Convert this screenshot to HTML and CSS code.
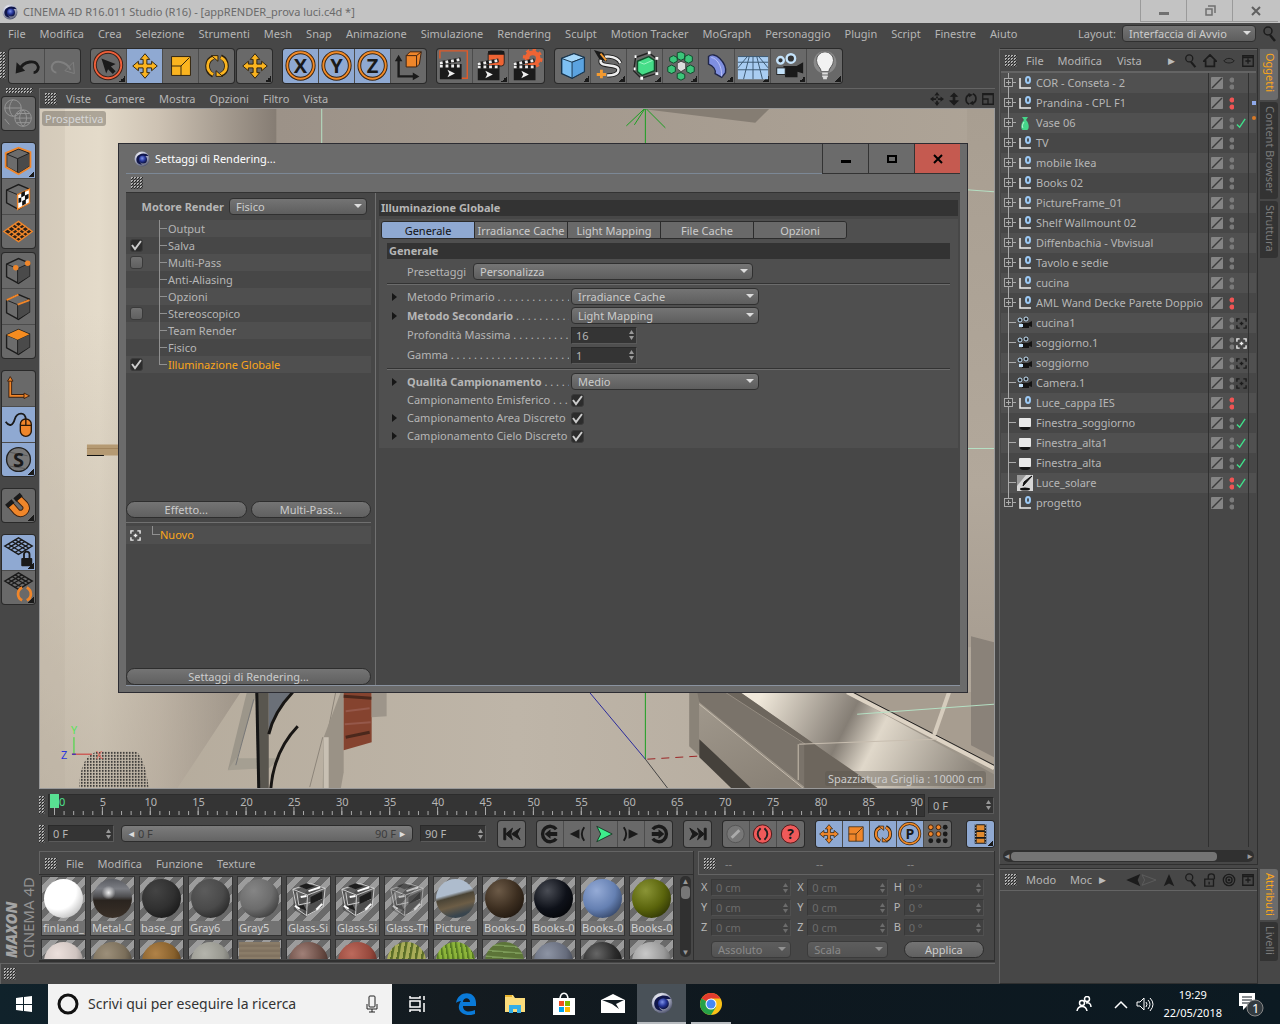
FILE: index.html
```html
<!DOCTYPE html>
<html lang="it">
<head>
<meta charset="utf-8">
<meta name="viewport" content="width=device-width, initial-scale=1">
<title>CINEMA 4D R16.011 Studio (R16) - [appRENDER_prova luci.c4d *]</title>
<link rel="stylesheet" href="styles.css">
</head>
<body>
<svg class="defs" aria-hidden="true">
<defs>
<radialGradient id="ball" cx=".4" cy=".3" r=".8"><stop offset="0" stop-color="#fff"/><stop offset=".5" stop-color="#b8bcd0"/><stop offset="1" stop-color="#333852"/></radialGradient>
<radialGradient id="lens" cx=".4" cy=".35" r=".7"><stop offset="0" stop-color="#7f93e8"/><stop offset=".5" stop-color="#27379a"/><stop offset="1" stop-color="#070b30"/></radialGradient>
<pattern id="dither" width="3" height="3" patternUnits="userSpaceOnUse"><rect width="1.6" height="1.6" fill="#222"/></pattern>
<symbol id="c4d" viewBox="0 0 16 16"><circle cx="8" cy="8" r="7.5" fill="url(#ball)"/><path d="M14.500 5C12 1 4 2 2.500 7c-1 4 2 7 6 6.500C5 12 5 8 8 6c2-1 5-1 6.500-1z" fill="#10164a"/><circle cx="9" cy="8.500" r="4" fill="url(#lens)"/></symbol>
<symbol id="undo" viewBox="0 0 36 36"><path d="M10 22c4-9 18-12 20-3 0 4-3 6-5 6" fill="none" stroke="currentColor" stroke-width="3"/><path d="M6 26l1-12 9 9z" fill="currentColor"/></symbol>
<symbol id="redo" viewBox="0 0 36 36"><path d="M26 22c-4-9-18-12-20-3 0 4 3 6 5 6" fill="none" stroke="currentColor" stroke-width="2"/><path d="M30 26l-1-12-9 9z" fill="none" stroke="currentColor"/></symbol>
<symbol id="pick" viewBox="0 0 36 36"><circle cx="17" cy="17" r="14" fill="none" stroke="#3a2018" stroke-width="4"/><circle cx="17" cy="17" r="14" fill="none" stroke="#f0603a" stroke-width="2"/><path d="M10 10l15 6-5 2.500 5 5-3 3-5-5-2 4.500z" fill="#1a1a1a"/></symbol>
<symbol id="move" viewBox="0 0 36 36"><path d="M18 5l5 6h-3v5h5v-3l6 5-6 5v-3h-5v5h3l-5 6-5-6h3v-5h-5v3l-6-5 6-5v3h5v-5h-3z" fill="currentColor" stroke="#2a2010"/></symbol>
<symbol id="scale" viewBox="0 0 36 36"><path d="M8 8h20v20H8z" fill="currentColor" stroke="#2a2010"/><path d="M8 18h10v10M18 18l9-9" fill="none" stroke="#2a2010"/></symbol>
<symbol id="rotate" viewBox="0 0 36 36"><g fill="none" stroke="#2a2010" stroke-width="5"><path d="M14 28C6 24 6 12 14 9M22 8c8 4 8 16 0 19"/></g><g fill="none" stroke="currentColor" stroke-width="3"><path d="M14 27C6 23 6 12 15 9M22 9c8 4 8 15-1 18"/></g><path d="M12 7h7v6zM24 29h-7v-6z" fill="currentColor" stroke="#2a2010"/></symbol>
<symbol id="ring" viewBox="0 0 36 36"><circle cx="17.500" cy="17.500" r="14" fill="none" stroke="#3a2410" stroke-width="4"/><circle cx="17.500" cy="17.500" r="14" fill="none" stroke="#f08a28" stroke-width="2"/></symbol>
<symbol id="axes" viewBox="0 0 36 36"><path d="M7 12v17h17" fill="none" stroke="#1a1a1a" stroke-width="2.500"/><path d="M3 13l4-7 4 7zM22 25l7 4-7 4z" fill="#1a1a1a"/><path d="M15 7l4-4h12l-2 13-3 3H15z" fill="#f0862a" stroke="#3a2010"/><path d="M15 7h11v12M26 7l5-4" fill="none" stroke="#3a2010"/></symbol>
<symbol id="clap" viewBox="0 0 36 36"><path d="M2 20h23v12H2z" fill="#1a1a1a"/><path d="M2 18h23" stroke="#1a1a1a" stroke-width="4"/><path d="M2 18h23" stroke="#eee" stroke-width="3" stroke-dasharray="3 3"/><path d="M2 15l22-4" stroke="#1a1a1a" stroke-width="4"/><path d="M2 15l22-4" stroke="#eee" stroke-width="3" stroke-dasharray="3 3"/><path d="M10 22l8 4-8 4 2-4z" fill="#eee"/></symbol>
<symbol id="rview" viewBox="0 0 36 36"><path d="M2 10V2h29v29h-7" fill="none" stroke="#e05a28" stroke-width="1.500"/><use href="#clap"/></symbol>
<symbol id="rpic" viewBox="0 0 36 36"><rect x="15" y="2" width="17" height="16" rx="3" fill="#ee6434" stroke="#222"/><path d="M15 2h17v4H15z" fill="#1a1a1a"/><use href="#clap" x="2" y="1"/></symbol>
<symbol id="rset" viewBox="0 0 36 36"><circle cx="24" cy="10" r="6" fill="none" stroke="#ee6434" stroke-width="5"/><circle cx="24" cy="10" r="9" fill="none" stroke="#ee6434" stroke-width="3" stroke-dasharray="3.500 3.500"/><use href="#clap" x="2" y="1"/></symbol>
<symbol id="cube" viewBox="0 0 36 36"><path d="M6 10l13-5 11 4v15l-13 7L6 26z" fill="#7cc0f4" stroke="#16324a" stroke-width="1.500"/><path d="M6 10l11 4 13-5-11-4z" fill="#a6d8fb" stroke="#16324a"/><path d="M17 14l13-5v15l-13 7z" fill="#5ba3e0" stroke="#16324a"/></symbol>
<symbol id="spline" viewBox="0 0 36 36"><path d="M30 15c-3-8-21-10-21-2 0 7 19 2 19 9 0 5-6 6-12 6" fill="none" stroke="#222" stroke-width="4.500"/><path d="M30 15c-3-8-21-10-21-2 0 7 19 2 19 9 0 5-6 6-12 6" fill="none" stroke="#eee" stroke-width="2.500"/><path d="M2 1l10 3 4 9-8-2z" fill="#1a1a1a"/><path d="M9 5l6 7" stroke="#f39a30" stroke-width="2"/><path d="M10 22v9M5 27h10" stroke="#f39a30" stroke-width="3"/></symbol>
<symbol id="subd" viewBox="0 0 36 36"><path d="M8 9l14-5 8 6v16l-16 5-8-8z" fill="none" stroke="#222" stroke-width="1.500"/><path d="M10 13l12-5 6 4v11l-13 5-5-4z" fill="#45dd88" stroke="#124a2a" stroke-linejoin="round" stroke-width="1.500"/><path d="M12 14l5 2 9-4" fill="none" stroke="#9ff5c4"/><path d="M7 8h2M21 4h3M29 10h3M29 26h3M13 31h3M6 21h2" stroke="#fff" stroke-width="3"/></symbol>
<symbol id="array" viewBox="0 0 36 36"><g fill="#3cc57a" stroke="#11452a"><path d="M14 4l4-1 4 2v5l-4 2-4-2zM14 26l4-1 4 2v4l-4 2-4-2zM6 9l4-2 4 2v4l-4 2-4-2zM22 8l4-2 4 2v5l-4 2-4-2zM4 19l4-2 4 2v5l-4 2-4-2zM24 19l4-2 4 2v5l-4 2-4-2z"/></g><path d="M14 15l4-2 5 2v6l-5 3-4-3z" fill="#ddd" stroke="#444"/></symbol>
<symbol id="bend" viewBox="0 0 36 36"><path d="M9 8c3-3 8-2 12 2s7 10 6 15l-4 5-7-4c1-4-2-8-7-10z" fill="#7f8fe0" stroke="#20264a" stroke-width="1.500"/><path d="M12 9c6 1 11 8 11 20" fill="none" stroke="#bcc5fa"/></symbol>
<symbol id="floor" viewBox="0 0 36 36"><path d="M2 8h32v24H2z" fill="#a9cdf2"/><path d="M2 8h32M2 14h32M2 22h32M18 8v24M12 8L2 20M24 8l10 12M14 8L8 32M22 8l6 24" stroke="#3a566e"/></symbol>
<symbol id="cam" viewBox="0 0 36 36"><path d="M12 18h14l7-4v12l-6-2v6H14z" fill="#1a1a1a"/><circle cx="9" cy="12" r="3.500" fill="#333" stroke="#c4e2fa" stroke-width="2.500"/><circle cx="20" cy="10" r="4.500" fill="#333" stroke="#c4e2fa" stroke-width="2.500"/><rect x="5" y="20" width="9" height="7" fill="#c4e2fa" stroke="#222"/></symbol>
<symbol id="bulb" viewBox="0 0 36 36"><circle cx="18" cy="14" r="12" fill="#aaa" opacity=".5"/><path d="M14 24c0-4-5-6-5-12a9 9 0 0118 0c0 6-5 8-5 12z" fill="#f2f2f2" stroke="#555"/><path d="M15 26h6M15 29h6M16 31h4" stroke="#ddd" stroke-width="2"/></symbol>
<symbol id="globe" viewBox="0 0 36 36" fill="none" stroke="#999"><circle cx="12" cy="12" r="9"/><path d="M3 12h18M12 3c-5 5-5 13 0 18"/><circle cx="23" cy="23" r="9"/><path d="M14 23h18M16 18h14M16 28h14M23 14c-5 5-5 13 0 18 5-5 5-13 0-18M3 24l5 6"/></symbol>
<symbol id="gcube" viewBox="0 0 36 36"><path d="M5 11l13-6 12 5v14l-12 8-13-7z" fill="#6c6c6c" stroke="#1c1c1c" stroke-width="1.500"/><path d="M17 16l13-6v14l-13 8z" fill="#4a4a4a"/><path d="M5 11l12 5 13-6M17 16v16" fill="none" stroke="#1c1c1c"/></symbol>
<symbol id="model" viewBox="0 0 36 36"><use href="#gcube"/><path d="M4 10l14-6 13 5v16l-13 8-14-8z" fill="none" stroke="#f0862a" stroke-width="2"/></symbol>
<symbol id="tex" viewBox="0 0 36 36"><use href="#gcube"/><path d="M17 16l13-6v15l-13 7z" fill="#fff" stroke="#f0862a" stroke-width="1.500"/><path d="M21 14l4-2v5l-4 2zM25 17l4-2v5l-4 2zM18 20l3-1v5l-3 1zM22 23l4-2v5l-4 2z" fill="#111"/></symbol>
<symbol id="plane" viewBox="0 0 36 36"><path d="M2 18L18 7l15 11-15 11z" fill="#2a2018" stroke="currentColor" stroke-width="1.500"/><path d="M6 15l15 11M10 12l15 11M14 10l15 11M30 15L15 26M26 12L11 23M22 10L7 21" stroke="currentColor" stroke-width="1.500"/></symbol>
<symbol id="mesh" viewBox="0 0 36 36"><path d="M3 11L18 2l15 9-15 9z" fill="none" stroke="#1a1a1a" stroke-width="1.500"/><path d="M7 9l15 9M11 6l15 9M14 4l15 9M29 9l-15 9M25 6L10 15M22 4L7 13" stroke="#1a1a1a" stroke-width="1.500"/></symbol>
<symbol id="points" viewBox="0 0 36 36"><use href="#gcube"/><circle cx="15" cy="15" r="3" fill="#f0862a"/><circle cx="28" cy="10" r="3" fill="#f0862a"/></symbol>
<symbol id="edges" viewBox="0 0 36 36"><use href="#gcube"/><path d="M5 11l13-6M17 16l13-5" stroke="#f0862a" stroke-width="2"/></symbol>
<symbol id="polys" viewBox="0 0 36 36"><use href="#gcube"/><path d="M5 11l13-6 12 5-13 6z" fill="#f68c20"/></symbol>
<symbol id="axis" viewBox="0 0 36 36"><path d="M9 9v17h15" fill="none" stroke="#3a2010" stroke-width="4"/><path d="M9 9v17h15" fill="none" stroke="#f0862a" stroke-width="2"/><path d="M6 10l3-5 3 5zM24 23l6 3-6 3z" fill="#f0862a" stroke="#3a2010"/></symbol>
<symbol id="mouse" viewBox="0 0 36 36"><path d="M4 15c4 6 8 4 10-3s12-9 12 1" fill="none" stroke="#1a1a1a" stroke-width="2"/><rect x="20" y="12" width="12" height="19" rx="6" fill="#f0862a" stroke="#2a1808" stroke-width="1.500"/><path d="M20 19h12M26 12v7" stroke="#2a1808" stroke-width="1.500"/></symbol>
<symbol id="disc" viewBox="0 0 36 36"><circle cx="18" cy="18" r="13" fill="#777" stroke="#222" stroke-width="1.500"/><path d="M8 10l20 4M7 25l19 3" stroke="#555"/></symbol>
<symbol id="magnet" viewBox="0 0 36 36"><path d="M9 17l7 8c5 5 14-2 9-8l-7-7" fill="none" stroke="#3a2010" stroke-width="8"/><path d="M9 17l7 8c5 5 14-2 9-8l-7-7" fill="none" stroke="#f0862a" stroke-width="6"/><path d="M5 19l7-6M14 12l7-6" stroke="#1a1a1a" stroke-width="5"/></symbol>
<symbol id="meshlock" viewBox="0 0 36 36"><use href="#mesh"/><rect x="21" y="24" width="12" height="9" rx="1" fill="#1a1a1a"/><path d="M24 24v-4c0-4 6-4 6 0v4" fill="none" stroke="#1a1a1a" stroke-width="2"/></symbol>
<symbol id="meshrot" viewBox="0 0 36 36"><use href="#mesh"/><path d="M22 18c-6 3-6 11 0 14M27 18c6 3 6 11 0 14" fill="none" stroke="#f0862a" stroke-width="3"/></symbol>
<symbol id="lens-s" viewBox="0 0 16 16"><circle cx="6" cy="5" r="4" fill="none" stroke="currentColor" stroke-width="1.500"/><path d="M8 9l5 6" stroke="currentColor" stroke-width="2.500"/></symbol>
<symbol id="home" viewBox="0 0 16 16"><path d="M1 8l7-7 7 7h-2v6H3V8z" fill="none" stroke="currentColor" stroke-width="2"/></symbol>
<symbol id="eye" viewBox="0 0 16 16"><path d="M2 8c3-4 9-4 12 0-3 3-9 3-12 0z" fill="none" stroke="currentColor"/></symbol>
<symbol id="plus" viewBox="0 0 16 16"><path d="M2 2h12v12H2zM8 5v6M5 8h6M2 4h12" fill="none" stroke="currentColor" stroke-width="1.500"/></symbol>
<symbol id="target" viewBox="0 0 16 16"><g fill="none" stroke="currentColor" stroke-width="1.500"><circle cx="8" cy="8" r="6.500"/><circle cx="8" cy="8" r="3.500"/></g><circle cx="8" cy="8" r="1.500" fill="currentColor"/></symbol>
<symbol id="lock" viewBox="0 0 16 16"><path d="M2 7h10v8H2zM6 7V4c0-4 7-4 7 0v3M7 10v3" fill="none" stroke="currentColor" stroke-width="1.500"/></symbol>
<symbol id="nav" viewBox="0 0 16 16"><path d="M8 0l3 4H5zM8 16l3-4H5zM0 8l4-3v6zM16 8l-4-3v6zM7 5h2v2H7zM7 10h2v2H7zM4 7h3v2H4zM9 7h3v2H9z" fill="currentColor"/></symbol>
<symbol id="dolly" viewBox="0 0 16 16"><path d="M8 1l4 4H9v5h4l-5 5-5-5h4V5H4z" fill="currentColor" stroke="currentColor"/></symbol>
<symbol id="orbit" viewBox="0 0 16 16"><path d="M6 14C1 12 1 4 7 3M10 2c5 2 5 10-1 11" fill="none" stroke="currentColor" stroke-width="2"/><path d="M5 1l5 2-4 3zM11 15l-5-2 4-3z" fill="currentColor"/></symbol>
<symbol id="maxi" viewBox="0 0 16 16"><path d="M2 2h12v12H2zM2 8h6v6M2 3h12" fill="none" stroke="currentColor" stroke-width="1.500"/></symbol>
<symbol id="i-null" viewBox="0 0 16 16"><path d="M3 3v10h11" fill="none" stroke="#eee" stroke-width="1.500"/><ellipse cx="11" cy="5" rx="2" ry="3" fill="none" stroke="#9cc9f4" stroke-width="2"/></symbol>
<symbol id="i-vase" viewBox="0 0 16 16"><path d="M5 2h6L9 5c4 4 3 10 1 10H6C4 15 3 9 7 5z" fill="#45d589"/><path d="M7 7c-2 3-2 5-1 6" fill="none" stroke="#b4f7d2"/></symbol>
<symbol id="i-cam" viewBox="0 0 16 16"><path d="M5 8h6l4-2v6l-3-1v2H5z" fill="#151515"/><g fill="#222" stroke="#c4e2fa"><circle cx="3" cy="5" r="2"/><circle cx="9" cy="4" r="2"/></g><path d="M2 9h4v3H2z" fill="#c4e2fa"/></symbol>
<symbol id="i-area" viewBox="0 0 16 16"><ellipse cx="8" cy="13" rx="5" ry="2" fill="#151515"/><rect x="2" y="3" width="12" height="9" rx="1" fill="#e8e8e8"/></symbol>
<symbol id="i-sun" viewBox="0 0 16 16"><path d="M0 0h16v16H0z" fill="#d8d8d8"/><path d="M0 0h9L0 11z" fill="#999"/><path d="M15 1L6 11l1-4 5-4z" fill="#111" stroke="#111"/><ellipse cx="8" cy="14" rx="5" ry="1.500" fill="#111"/></symbol>
<symbol id="layer" viewBox="0 0 12 12"><rect width="12" height="12" rx="1" fill="#858585"/><path d="M1 11L11 1" stroke="#3c3c3c" stroke-width="1.500"/></symbol>
<symbol id="tick" viewBox="0 0 12 12"><path d="M1 7l3 3 6-9" fill="none" stroke="#3fe08a" stroke-width="1.500"/></symbol>
<symbol id="frame" viewBox="0 0 12 12"><path d="M1 4V1h3M8 1h3v3M11 8v3H8M4 11H1V8M6 4v4M4 6h4" fill="none" stroke="currentColor" stroke-width="1.500"/></symbol>
<symbol id="glass" viewBox="0 0 44 44"><path d="M6 14l22-8 11 5-3 20-17 9L7 33z" fill="#444" opacity=".7"/><path d="M6 12l18-6 15 5-18 7zM21 18l-1 21M10 15l2 13 10-2 14-4M6 12l4 20 10 7 17-9 2-19" fill="none" stroke="#cfcfcf"/><path d="M12 9l8-3 8 3-8 3zM24 20l12-6v8l-12 5zM10 30l7-2 3 6z" fill="#1d1d1d"/><path d="M8 29l5 3M30 33l6-6M14 20l6-1M22 14l12-4" stroke="#fff" stroke-width="2"/></symbol>
</defs>
</svg>

<header class="titlebar">
<svg class="s16"><use href="#c4d"/></svg>
<h1>CINEMA 4D R16.011 Studio (R16) - [appRENDER_prova luci.c4d *]</h1>
<div class="winbtns">
<button aria-label="Riduci"><svg width="12" height="12"><path d="M1 7h10v3H1z" fill="#707070"/></svg></button>
<button aria-label="Ripristina"><svg width="12" height="12"><path d="M2 4h6v6H2zM4 1h7v7" fill="none" stroke="#707070" stroke-width="1.500"/></svg></button>
<button aria-label="Chiudi"><svg width="12" height="12"><path d="M2 2l8 8M10 2l-8 8" stroke="#606060" stroke-width="2"/></svg></button>
</div>
</header>

<nav class="menubar">
<a href="#">File</a><a href="#">Modifica</a><a href="#">Crea</a><a href="#">Selezione</a><a href="#">Strumenti</a><a href="#">Mesh</a><a href="#">Snap</a><a href="#">Animazione</a><a href="#">Simulazione</a><a href="#">Rendering</a><a href="#">Sculpt</a><a href="#">Motion Tracker</a><a href="#">MoGraph</a><a href="#">Personaggio</a><a href="#">Plugin</a><a href="#">Script</a><a href="#">Finestre</a><a href="#">Aiuto</a>
<label class="push" for="layout">Layout:</label>
<select id="layout"><option>Interfaccia di Avvio</option></select>
<svg class="s16 ink"><use href="#lens-s"/></svg>
</nav>

<div class="main">
<div class="left">
<div class="toolbar">
<i class="grip tall"></i>
<div class="grp"><button aria-label="Annulla"><svg><use href="#undo"/></svg></button><button class="dim" aria-label="Ripeti"><svg><use href="#redo"/></svg></button></div>
<div class="grp close"><button class="more" aria-label="Selezione"><svg><use href="#pick"/></svg></button><button class="on" aria-label="Sposta"><svg class="yel"><use href="#move"/></svg></button><button aria-label="Scala"><svg class="yel"><use href="#scale"/></svg></button><button aria-label="Ruota"><svg class="yel"><use href="#rotate"/></svg></button></div>
<div class="grp"><button class="more" aria-label="Ultimo strumento"><svg class="yel"><use href="#move"/></svg></button></div>
<div class="grp"><button class="on axis"><svg><use href="#ring"/></svg><b>X</b></button><button class="on axis"><svg><use href="#ring"/></svg><b>Y</b></button><button class="on axis"><svg><use href="#ring"/></svg><b>Z</b></button><button aria-label="Coordinate"><svg><use href="#axes"/></svg></button></div>
<div class="grp"><button aria-label="Render vista"><svg><use href="#rview"/></svg></button><button class="more" aria-label="Render immagine"><svg><use href="#rpic"/></svg></button><button aria-label="Settaggi render"><svg><use href="#rset"/></svg></button></div>
<div class="grp"><button class="more" aria-label="Cubo"><svg><use href="#cube"/></svg></button><button class="more" aria-label="Spline"><svg><use href="#spline"/></svg></button><button class="more" aria-label="Generatore"><svg><use href="#subd"/></svg></button><button class="more" aria-label="Array"><svg><use href="#array"/></svg></button><button class="more" aria-label="Deformatore"><svg><use href="#bend"/></svg></button><button class="more" aria-label="Ambiente"><svg><use href="#floor"/></svg></button><button class="more" aria-label="Camera"><svg><use href="#cam"/></svg></button><button class="more" aria-label="Luce"><svg><use href="#bulb"/></svg></button></div>
</div>

<div class="work">
<aside class="tools">
<i class="grip wide"></i>
<div class="vgrp gap"><button aria-label="Converti"><svg><use href="#globe"/></svg></button></div>
<div class="vgrp"><button class="on more" aria-label="Modello"><svg><use href="#model"/></svg></button><button aria-label="Texture"><svg><use href="#tex"/></svg></button><button aria-label="Piano"><svg class="org"><use href="#plane"/></svg></button></div>
<div class="vgrp gap"><button aria-label="Punti"><svg><use href="#points"/></svg></button><button aria-label="Bordi"><svg><use href="#edges"/></svg></button><button aria-label="Poligoni"><svg><use href="#polys"/></svg></button></div>
<div class="vgrp gap"><button aria-label="Asse"><svg><use href="#axis"/></svg></button><button class="on" aria-label="Tweak"><svg><use href="#mouse"/></svg></button><button class="on axis more"><svg><use href="#disc"/></svg><b>S</b></button></div>
<div class="vgrp gap"><button class="more" aria-label="Snap"><svg><use href="#magnet"/></svg></button></div>
<div class="vgrp"><button class="on more" aria-label="Blocca piano"><svg><use href="#meshlock"/></svg></button><button class="more" aria-label="Ruota piano"><svg><use href="#meshrot"/></svg></button></div>
<div class="brand"><span><b>MAXON</b><br>CINEMA 4D</span></div>
</aside>

<div class="center">
<nav class="panelbar view"><i class="grip"></i><a href="#">Viste</a><a href="#">Camere</a><a href="#">Mostra</a><a href="#">Opzioni</a><a href="#">Filtro</a><a href="#">Vista</a>
<span class="push ico"><svg><use href="#nav"/></svg><svg><use href="#dolly"/></svg><svg><use href="#orbit"/></svg><svg><use href="#maxi"/></svg></span></nav>
<div class="viewport">
<svg class="scene" viewBox="40 108 955 682" preserveAspectRatio="xMidYMid slice">
<defs>
<linearGradient id="w1" gradientUnits="userSpaceOnUse" x1="40" x2="277" y1="0" y2="0"><stop offset="0" stop-color="#ddd3c3"/><stop offset=".25" stop-color="#e4dbca"/><stop offset=".5" stop-color="#cdc2b3"/><stop offset="1" stop-color="#857c73"/></linearGradient>
<linearGradient id="w2" x2="0" y2="1"><stop offset=".3" stop-color="#a59b8d" stop-opacity="0"/><stop offset="1" stop-color="#a59b8d" stop-opacity=".5"/></linearGradient>
<linearGradient id="w3"><stop offset="0" stop-color="#9c9288"/><stop offset="1" stop-color="#aea497"/></linearGradient>
<linearGradient id="fl"><stop offset="0" stop-color="#b3a999"/><stop offset=".5" stop-color="#beb5a8"/><stop offset="1" stop-color="#b0a699"/></linearGradient>
<linearGradient id="ct" gradientUnits="userSpaceOnUse" x1="760" y1="700" x2="960" y2="800"><stop offset="0" stop-color="#f0e8da"/><stop offset=".4" stop-color="#857e75"/><stop offset=".55" stop-color="#e0d8ca"/><stop offset="1" stop-color="#8d867c"/></linearGradient>
<linearGradient id="dr" x2=".6" y2="1"><stop offset="0" stop-color="#a0988c"/><stop offset="1" stop-color="#8a8277"/></linearGradient>
<linearGradient id="rw" y2="1" x2="0"><stop offset="0" stop-color="#a89e91"/><stop offset=".7" stop-color="#b2a89b"/><stop offset="1" stop-color="#a89e92"/></linearGradient>
</defs>
<path d="M40 108h955v682H40z" fill="url(#fl)"/>
<path d="M40 108h237v530L177 790H40z" fill="url(#w1)"/>
<path d="M40 108h237v530L177 790H40z" fill="url(#w2)"/>
<path d="M40 108h25v682H40z" fill="#b5ab9b" opacity=".2"/>
<path d="M277 108h718v36H277z" fill="url(#w3)"/>
<path d="M634 108h137l-15 15-90-11z" fill="#857d73"/>
<path d="M968 108h27v540h-27z" fill="url(#rw)"/>
<path d="M87 445h32v11H87z" fill="#b59a73"/><path d="M87 449h32" stroke="#a2855e"/><path d="M87 456h17" stroke="#111"/>
<path d="M247 693h10l-22 74-7 4z" fill="#9c968a"/><path d="M228 771l8-12h45l-12 10z" fill="#a59f92"/><path d="M254 700l-18 66" stroke="#777"/>
<path d="M256 693h13v97h-11z" fill="#59564f"/><path d="M257 693l2 97" stroke="#151515" stroke-width="3"/>
<path d="M269 693h23q-18 20-23 40z" fill="#6b7078"/><path d="M293 693q-19 20-24 42M298 727q-24 25-27 63" fill="none" stroke="#181614" stroke-width="3"/>
<path d="M336 693l-8 40M323 738l-13 50" fill="none" stroke="#8d8579"/><path d="M324 738l17-45h3v80l-3 17h-18z" fill="#9a9286"/><path d="M324 738h5v52h-5z" fill="#c8c0b3"/>
<path d="M344 693h28v50l-28 8z" fill="#85432f"/><path d="M344 697l28 2M346 738l24-5" stroke="#4b281c" stroke-width="3"/><path d="M346 712l24-3M345 725l26-2" stroke="#95584a" stroke-width="2"/><path d="M372 693h15v24l-15 1z" fill="#9d958a"/>
<path d="M79 790q1-38 23-38h32q10 0 15 38z" fill="url(#dither)"/>
<path d="M690 693h305v97H733l-43-43z" fill="#9e968a"/>
<path d="M690 693h10v63l-10-9z" fill="#8a8378"/>
<path d="M700 703l106 87h-53l-53-50z" fill="url(#dr)"/><path d="M698 693h42l68 47v50l-108-87z" fill="#7a736a"/>
<path d="M700 740l53 50h-20l-33-32z" fill="#45413b"/>
<path d="M741 693h104l150 82v15H880z" fill="url(#ct)"/><path d="M726 693h15l139 97h-75V745z" fill="#6d665d"/><path d="M726 693l80 52" stroke="#958d82"/>
<path d="M845 693h150v77z" fill="#a79d90"/><path d="M848 693l147 76" stroke="#ddd3c4" stroke-width="4"/><path d="M848 690l147 76" stroke="#222"/><path d="M950 693l-15 43" stroke="#d6ccbd" stroke-width="4"/>
<path d="M800 745l138-5M799 745v36M700 705l105 85" fill="none" stroke="#c8beb0"/>
<path d="M972 637l23 6v115l-23-12z" fill="#8a8279"/>
<path d="M646 108v652M646 108l-19 18M646 108l20 20M646 108l-11 17" stroke="#1aa020" fill="none"/>
<path d="M590 693l56 67" stroke="#2a2a9c"/><path d="M646 760l23 30" stroke="#444"/><path d="M648 760l50-3" stroke="#9c2525" stroke-dasharray="8 6"/>
<path d="M322 108v36M858 715l137-10M968 190l27 2M968 449h27" stroke="#b5e0c4"/>
<path d="M74 738v18" stroke="#35dd35"/><path d="M72 755h20" stroke="#d03030"/><path d="M72 755h4" stroke="#2020dd"/>
<g class="gizmo"><text x="71" y="735" fill="#56e556">Y</text><text x="61" y="760" fill="#2a35dd">Z</text><text x="96" y="760" fill="#e06a5a">X</text></g>
</svg>
<span class="tag tl">Prospettiva</span>
<span class="tag br">Spazziatura Griglia : 10000 cm</span>
</div>

<div class="timeline">
<i class="grip tall"></i>
<div class="ruler"><span class="head"></span>
<ol><li>0</li><li>5</li><li>10</li><li>15</li><li>20</li><li>25</li><li>30</li><li>35</li><li>40</li><li>45</li><li>50</li><li>55</li><li>60</li><li>65</li><li>70</li><li>75</li><li>80</li><li>85</li><li>90</li></ol>
<svg class="ticks" viewBox="0 0 865 8" preserveAspectRatio="none"><path d="M0 6h865" stroke="#aaa" stroke-width="4" stroke-dasharray="1 8.600"/><path d="M0 4h865" stroke="#aaa" stroke-width="8" stroke-dasharray="1 47"/></svg></div>
<input class="num" value="0 F" aria-label="Fotogramma">
</div>

<div class="play">
<i class="grip tall"></i>
<input class="num" value="0 F" aria-label="Inizio">
<div class="range"><span>◄</span><span>0 F</span><span class="push">90 F</span><span>►</span></div>
<input class="num end" value="90 F" aria-label="Fine">
<div class="pgrp"><button aria-label="Inizio"><svg viewBox="0 0 27 26"><path d="M5 7v12h2V7zM14 7l-7 6 7 6-2-6zM22 7l-9 6 9 6-3-6z" fill="#1a1a1a" stroke="#1a1a1a"/></svg></button></div>
<div class="pgrp"><button aria-label="Chiave precedente"><svg viewBox="0 0 27 26"><path d="M20 8a8 8 0 100 10" fill="none" stroke="#1a1a1a" stroke-width="3.500"/><path d="M8 13l6-5v3h7v4h-7v3z" fill="#1a1a1a"/></svg></button><button aria-label="Indietro"><svg viewBox="0 0 27 26"><path d="M16 8v10l-10-5z" fill="#1a1a1a"/><path d="M21 6q-5 7 0 14" fill="none" stroke="#1a1a1a" stroke-width="2"/></svg></button><button aria-label="Play"><svg viewBox="0 0 27 26"><path d="M6 5l16 8-16 8 4-8z" fill="#3df08c" stroke="#1a3a28"/></svg></button><button aria-label="Avanti"><svg viewBox="0 0 27 26"><path d="M11 8v10l10-5z" fill="#1a1a1a"/><path d="M6 6q5 7 0 14" fill="none" stroke="#1a1a1a" stroke-width="2"/></svg></button><button aria-label="Chiave successiva"><svg viewBox="0 0 27 26"><path d="M7 8a8 8 0 110 10" fill="none" stroke="#1a1a1a" stroke-width="3.500"/><path d="M19 13l-6-5v3H6v4h7v3z" fill="#1a1a1a"/></svg></button></div>
<div class="pgrp"><button aria-label="Fine"><svg viewBox="0 0 27 26"><path d="M20 7v12h2V7zM13 7l7 6-7 6 2-6zM5 7l9 6-9 6 3-6z" fill="#1a1a1a" stroke="#1a1a1a"/></svg></button></div>
<div class="pgrp"><button aria-label="Registra"><svg viewBox="0 0 27 26"><circle cx="13" cy="13" r="9" fill="#777" stroke="#555"/><path d="M9 17l8-8" stroke="#aaa" stroke-width="3"/></svg></button><button aria-label="Auto chiave"><svg viewBox="0 0 27 26"><circle cx="13" cy="13" r="9.500" fill="#f05a5a" stroke="#501818"/><path d="M11 7q-6 6 0 12M15 7q6 6 0 12" fill="none" stroke="#222" stroke-width="2"/></svg></button><button class="axis" aria-label="Aiuto chiave"><svg viewBox="0 0 27 26"><circle cx="13" cy="13" r="9.500" fill="#f05a5a" stroke="#501818"/></svg><b>?</b></button></div>
<div class="pgrp"><button class="on" aria-label="Posizione"><svg class="org"><use href="#move"/></svg></button><button class="on" aria-label="Scala"><svg class="org"><use href="#scale"/></svg></button><button class="on" aria-label="Rotazione"><svg class="org"><use href="#rotate"/></svg></button><button class="on axis"><svg><use href="#ring"/></svg><b>P</b></button><button aria-label="PLA"><svg viewBox="0 0 27 26"><g fill="#1a1a1a"><circle cx="6" cy="20" r="2.500"/><circle cx="14" cy="20" r="2.500"/><circle cx="21" cy="20" r="2.500"/><circle cx="21" cy="13" r="2.500"/><circle cx="21" cy="6" r="2.500"/></g><g fill="#f0862a" stroke="#3a2010"><circle cx="6" cy="6" r="2.500"/><circle cx="14" cy="6" r="2.500"/><circle cx="6" cy="13" r="2.500"/><circle cx="14" cy="13" r="2.500"/></g></svg></button></div>
<div class="pgrp solo"><button class="on more" aria-label="Animatore"><svg viewBox="0 0 27 26"><path d="M7 3h12v20H7z" fill="#1a1a1a"/><path d="M9 4h8v5H9zM9 11h8v5H9zM9 18h8v4H9z" fill="#e08a30"/><path d="M8 3v20M18 3v20" stroke="#ddd" stroke-dasharray="1 2"/></svg></button></div>
</div>

<div class="bottom">
<section class="materials">
<nav class="panelbar"><i class="grip"></i><a href="#">File</a><a href="#">Modifica</a><a href="#">Funzione</a><a href="#">Texture</a></nav>
<div class="matwrap">
<ul>
<li><i class="ball white"></i><span>finland_</span></li><li><i class="ball metal"></i><span>Metal-C</span></li><li><i class="ball base"></i><span>base_gr</span></li><li><i class="ball gray6"></i><span>Gray6</span></li><li><i class="ball gray5"></i><span>Gray5</span></li><li><svg><use href="#glass"/></svg><span>Glass-Si</span></li><li><svg><use href="#glass"/></svg><span>Glass-Si</span></li><li><svg class="faint"><use href="#glass"/></svg><span>Glass-Th</span></li><li><i class="ball pic"></i><span>Picture</span></li><li><i class="ball brown"></i><span>Books-0</span></li><li><i class="ball black"></i><span>Books-0</span></li><li><i class="ball blue"></i><span>Books-0</span></li><li><i class="ball olive"></i><span>Books-0</span></li>
<li><i class="ball pink"></i></li><li><i class="ball taupe"></i></li><li><i class="ball wood"></i></li><li><i class="ball stone"></i></li><li><i class="plank"></i></li><li><i class="ball granite"></i></li><li><i class="ball brick"></i></li><li><i class="ball leaf"></i></li><li><i class="ball lime"></i></li><li><i class="ball moss"></i></li><li><i class="ball slate"></i></li><li><i class="ball coal"></i></li><li><i class="ball silver"></i></li>
</ul>
<div class="vscroll"><span>▲</span><i></i><span class="down">▼</span></div>
</div>
</section>
<section class="coords">
<nav class="panelbar"><i class="grip"></i><span>--</span><span>--</span><span>--</span></nav>
<div class="cgrid">
<label for="px">X</label><input id="px" class="num" value="0 cm" disabled><label for="sx">X</label><input id="sx" class="num" value="0 cm" disabled><label for="rh">H</label><input id="rh" class="num" value="0 °" disabled>
<label for="py">Y</label><input id="py" class="num" value="0 cm" disabled><label for="sy">Y</label><input id="sy" class="num" value="0 cm" disabled><label for="rp">P</label><input id="rp" class="num" value="0 °" disabled>
<label for="pz">Z</label><input id="pz" class="num" value="0 cm" disabled><label for="sz">Z</label><input id="sz" class="num" value="0 cm" disabled><label for="rb">B</label><input id="rb" class="num" value="0 °" disabled>
<select class="c2" disabled aria-label="Modalità"><option>Assoluto</option></select><select class="c4" disabled aria-label="Dimensione"><option>Scala</option></select><button class="pill c6">Applica</button>
</div>
</section>
</div>
</div>
</div>
<div class="status"><i class="grip"></i></div>
</div>

<div class="right">
<section class="objects">
<nav class="panelbar"><i class="grip"></i><a href="#">File</a><a href="#">Modifica</a><a href="#">Vista</a><span class="push ico"><small>▶</small><svg><use href="#lens-s"/></svg><svg><use href="#home"/></svg><svg><use href="#eye"/></svg><svg><use href="#plus"/></svg></span></nav>
<ul class="tree">
<li class="x"><svg class="ic"><use href="#i-null"/></svg><span>COR - Conseta - 2</span><svg class="ly"><use href="#layer"/></svg><i class="vis"></i></li>
<li class="x"><svg class="ic"><use href="#i-null"/></svg><span>Prandina - CPL F1</span><svg class="ly"><use href="#layer"/></svg><i class="vis red"></i><b class="tg sq"></b></li>
<li class="x"><svg class="ic"><use href="#i-vase"/></svg><span>Vase 06</span><svg class="ly"><use href="#layer"/></svg><i class="vis"></i><svg class="st"><use href="#tick"/></svg><b class="tg or"></b></li>
<li class="x"><svg class="ic"><use href="#i-null"/></svg><span>TV</span><svg class="ly"><use href="#layer"/></svg><i class="vis"></i></li>
<li class="x"><svg class="ic"><use href="#i-null"/></svg><span>mobile Ikea</span><svg class="ly"><use href="#layer"/></svg><i class="vis"></i></li>
<li class="x"><svg class="ic"><use href="#i-null"/></svg><span>Books 02</span><svg class="ly"><use href="#layer"/></svg><i class="vis"></i></li>
<li class="x"><svg class="ic"><use href="#i-null"/></svg><span>PictureFrame_01</span><svg class="ly"><use href="#layer"/></svg><i class="vis"></i></li>
<li class="x"><svg class="ic"><use href="#i-null"/></svg><span>Shelf Wallmount 02</span><svg class="ly"><use href="#layer"/></svg><i class="vis"></i></li>
<li class="x"><svg class="ic"><use href="#i-null"/></svg><span>Diffenbachia - Vbvisual</span><svg class="ly"><use href="#layer"/></svg><i class="vis"></i></li>
<li class="x"><svg class="ic"><use href="#i-null"/></svg><span>Tavolo e sedie</span><svg class="ly"><use href="#layer"/></svg><i class="vis"></i></li>
<li class="x"><svg class="ic"><use href="#i-null"/></svg><span>cucina</span><svg class="ly"><use href="#layer"/></svg><i class="vis"></i></li>
<li class="x"><svg class="ic"><use href="#i-null"/></svg><span>AML Wand Decke Parete Doppio</span><svg class="ly"><use href="#layer"/></svg><i class="vis red"></i></li>
<li><svg class="ic"><use href="#i-cam"/></svg><span>cucina1</span><svg class="ly"><use href="#layer"/></svg><i class="vis"></i><svg class="st ink"><use href="#frame"/></svg></li>
<li><svg class="ic"><use href="#i-cam"/></svg><span>soggiorno.1</span><svg class="ly"><use href="#layer"/></svg><i class="vis"></i><svg class="st lit"><use href="#frame"/></svg></li>
<li><svg class="ic"><use href="#i-cam"/></svg><span>soggiorno</span><svg class="ly"><use href="#layer"/></svg><i class="vis"></i><svg class="st ink"><use href="#frame"/></svg></li>
<li><svg class="ic"><use href="#i-cam"/></svg><span>Camera.1</span><svg class="ly"><use href="#layer"/></svg><i class="vis"></i><svg class="st ink"><use href="#frame"/></svg></li>
<li class="x"><svg class="ic"><use href="#i-null"/></svg><span>Luce_cappa IES</span><svg class="ly"><use href="#layer"/></svg><i class="vis red"></i></li>
<li><svg class="ic"><use href="#i-area"/></svg><span>Finestra_soggiorno</span><svg class="ly"><use href="#layer"/></svg><i class="vis"></i><svg class="st"><use href="#tick"/></svg></li>
<li><svg class="ic"><use href="#i-area"/></svg><span>Finestra_alta1</span><svg class="ly"><use href="#layer"/></svg><i class="vis"></i><svg class="st"><use href="#tick"/></svg></li>
<li><svg class="ic"><use href="#i-area"/></svg><span>Finestra_alta</span><svg class="ly"><use href="#layer"/></svg><i class="vis"></i><svg class="st"><use href="#tick"/></svg></li>
<li><svg class="ic"><use href="#i-sun"/></svg><span>Luce_solare</span><svg class="ly"><use href="#layer"/></svg><i class="vis red"></i><svg class="st"><use href="#tick"/></svg></li>
<li class="x last"><svg class="ic"><use href="#i-null"/></svg><span>progetto</span><svg class="ly"><use href="#layer"/></svg><i class="vis"></i></li>
</ul>
<div class="hscroll"><span>◄</span><i></i><span class="push">►</span></div>
</section>
<div class="tabs"><a class="active" href="#">Oggetti</a><a class="t2" href="#">Content Browser</a><a class="t3" href="#">Struttura</a></div>
<section class="attrs">
<nav class="panelbar"><i class="grip"></i><a href="#">Modo</a><a href="#">Moc</a><small>▶</small><span class="push ico"><svg class="w2" viewBox="0 0 36 16"><path d="M0 8l16-7-3 7 3 7z" fill="#1c1c1c"/><path d="M34 8L18 2l3 6-3 6z" fill="none" stroke="#5e5e5e"/></svg><svg viewBox="0 0 16 16"><path d="M8 1l6 14-6-3-6 3z" fill="#1c1c1c"/></svg></span><span class="ico ico2"><svg><use href="#lens-s"/></svg><svg><use href="#lock"/></svg><svg><use href="#target"/></svg><svg><use href="#plus"/></svg></span></nav>
</section>
<div class="tabs"><a class="active" href="#">Attributi</a><a class="t5" href="#">Livelli</a></div>
</div>
</div>

<section class="dialog" role="dialog" aria-label="Settaggi di Rendering">
<header><svg class="s16"><use href="#c4d"/></svg><h2>Settaggi di Rendering...</h2>
<div class="dbtns"><button aria-label="Riduci"><svg width="12" height="12"><path d="M1 7h10v3H1z"/></svg></button><button aria-label="Ingrandisci"><svg width="12" height="12"><path d="M2 3h8v6H2z" fill="none" stroke="#000" stroke-width="2"/></svg></button><button class="x" aria-label="Chiudi"><svg width="12" height="12"><path d="M2 2l8 8M10 2l-8 8" stroke="#000" stroke-width="2"/></svg></button></div></header>
<div class="dgrip"><i class="grip"></i></div>
<div class="dbody">
<div class="dleft">
<div class="engine"><label for="eng">Motore Render</label><select id="eng"><option>Fisico</option></select></div>
<ul class="opts">
<li><i></i><span>Output</span></li>
<li><input type="checkbox" id="o1" checked><label for="o1">Salva</label></li>
<li><input type="checkbox" id="o2"><label for="o2">Multi-Pass</label></li>
<li><i></i><span>Anti-Aliasing</span></li>
<li><i></i><span>Opzioni</span></li>
<li><input type="checkbox" id="o3"><label for="o3">Stereoscopico</label></li>
<li><i></i><span>Team Render</span></li>
<li><i></i><span>Fisico</span></li>
<li class="sel"><input type="checkbox" id="o4" checked><label for="o4">Illuminazione Globale</label></li>
</ul>
<div class="btnrow"><button class="pill">Effetto...</button><button class="pill">Multi-Pass...</button></div>
<div class="preset"><svg class="st lit"><use href="#frame"/></svg><span>Nuovo</span></div>
<button class="pill full">Settaggi di Rendering...</button>
</div>
<div class="dright">
<h3>Illuminazione Globale</h3>
<div class="form">
<div class="dtabs"><button class="cur">Generale</button><button>Irradiance Cache</button><button>Light Mapping</button><button>File Cache</button><button>Opzioni</button></div>
<h4>Generale</h4>
<div class="row pre"><label for="f0">Presettaggi</label><select id="f0"><option>Personalizza</option></select></div>
<hr>
<div class="row ar"><label for="f1">Metodo Primario</label><select id="f1"><option>Irradiance Cache</option></select></div>
<div class="row ar"><label class="bd" for="f2">Metodo Secondario</label><select id="f2"><option>Light Mapping</option></select></div>
<div class="row n"><label for="f3">Profondità Massima</label><input class="num" id="f3" value="16"></div>
<div class="row n"><label for="f4">Gamma</label><input class="num" id="f4" value="1"></div>
<hr>
<div class="row ar"><label class="bd" for="f5">Qualità Campionamento</label><select id="f5"><option>Medio</option></select></div>
<div class="row c"><label for="f6">Campionamento Emisferico</label><input type="checkbox" id="f6" checked></div>
<div class="row c ar plain"><label for="f7">Campionamento Area Discreto</label><input type="checkbox" id="f7" checked></div>
<div class="row c ar plain"><label for="f8">Campionamento Cielo Discreto</label><input type="checkbox" id="f8" checked></div>
</div>
</div>
</div>
</section>

<footer class="taskbar">
<button class="start" aria-label="Start"><svg width="16" height="16"><path d="M0 2l7-1v7H0zM8 1l8-1v8H8zM0 9h7v6l-7-1zM8 9h8v7l-8-1z" fill="#fff"/></svg></button>
<div class="search"><svg width="22" height="22"><circle cx="11" cy="11" r="9" fill="none" stroke="#111" stroke-width="3"/></svg><input placeholder="Scrivi qui per eseguire la ricerca" aria-label="Ricerca"><svg width="14" height="18"><rect x="4" y="1" width="6" height="11" fill="none" stroke="#222" rx="1"/><path d="M2 9v5h10V9M7 14v3M4 17h6" fill="none" stroke="#222"/></svg></div>
<button class="app" aria-label="Visualizzazione attività"><svg width="18" height="18"><path d="M2 1v2h10V1M2 6h10v6H2zM2 17v-2h10v2M16 1v4M16 8v9" fill="none" stroke="#fff" stroke-width="1.500"/></svg></button>
<button class="app" aria-label="Edge"><svg width="22" height="22"><path d="M1 10C3-3 21-3 21 10v3H8c0 7 8 6 12 4v4C10 25-1 18 6 8c-2 0-4 1-5 2zM8 9h7c0-5-7-5-7 0z" fill="#0a7ad8"/></svg></button>
<button class="app" aria-label="Esplora file"><svg width="22" height="20"><path d="M1 1h8l2 3h10v14H1z" fill="#fbdc7c"/><path d="M1 1h7v2H1z" fill="#e9b530"/><path d="M5 19v-8h12v8h-4v-4H9v4z" fill="#34aee8"/></svg></button>
<button class="app" aria-label="Store"><svg width="24" height="24"><path d="M8 8C8-1 16-1 16 8" fill="none" stroke="#fff" stroke-width="1.500"/><path d="M1 6h22v17H1z" fill="#fff"/><path d="M7 9h5v5H7z" fill="#f25022"/><path d="M13 9h5v5h-5z" fill="#7fba00"/><path d="M7 15h5v5H7z" fill="#00a4ef"/><path d="M13 15h5v5h-5z" fill="#ffb900"/></svg></button>
<button class="app" aria-label="Posta"><svg width="24" height="20"><path d="M0 6l12-6 12 6v13H0z" fill="#fff"/><path d="M1 6h22l-8 4 3 5-7-5z" fill="#111b22"/></svg></button>
<button class="app cur" aria-label="Cinema 4D"><svg width="22" height="22"><use href="#c4d"/></svg></button>
<button class="app run" aria-label="Chrome"><svg width="22" height="22" viewBox="0 0 22 22"><circle cx="11" cy="11" r="11" fill="#fbc116"/><path d="M11 11L1.500 5.500A11 11 0 0120.500 5.500H11z" fill="#e33b2e"/><path d="M11 11L1.500 5.500A11 11 0 0011 22l5-8z" fill="#26a148"/><circle cx="11" cy="11" r="5.500" fill="#fff"/><circle cx="11" cy="11" r="4.500" fill="#4688f4"/></svg></button>
<div class="tray">
<svg width="16" height="16"><g fill="none" stroke="#fff" stroke-width="1.500"><circle cx="6" cy="7" r="2.500"/><path d="M1 15c1-6 9-6 10 0"/><circle cx="11" cy="3" r="2.500"/><path d="M10 7c3-1 5 1 5 4"/></g></svg>
<svg width="14" height="10"><path d="M1 9l6-6 6 6" fill="none" stroke="#fff" stroke-width="1.500"/></svg>
<svg width="18" height="16"><path d="M1 6h3l4-4v12l-4-4H1zM10 6q2 2 0 5M12 4q4 4 0 9M14 2q6 6 0 13" fill="none" stroke="#fff"/></svg>
<time>19:29<br>22/05/2018</time>
<svg class="note" width="26" height="26"><path d="M1 2h16v13H9l-4 4v-4H1z" fill="#fff"/><path d="M4 6h10M4 9h10M4 12h7" stroke="#111b22"/><circle cx="17" cy="17" r="8" fill="#333b40" stroke="#888"/><text x="14" y="22">1</text></svg>
</div>
</footer>
</body>
</html>
```
FILE: styles.css
```css
*, ::before, ::after { box-sizing: border-box; }
body { margin: 0; min-height: 100vh; display: flex; flex-direction: column; background: #474747; color: #b6b6b6; font: 11px/16px "Noto Sans", "Open Sans", sans-serif; position: relative; overflow-x: hidden; }
a { color: inherit; text-decoration: none; white-space: nowrap; }
ul, ol { list-style: none; margin: 0; padding: 0; }
h1, h2, h3, h4 { margin: 0; font: inherit; }
button, input, select { font: inherit; color: inherit; margin: 0; padding: 0; border: 0; background: none; min-width: 0; }
svg { display: block; flex: none; }
.defs { width: 0; height: 0; position: absolute; }
.s16 { width: 16px; height: 16px; }
.ink { color: #1c1c1c; }
.lit { color: #eee; }
.push { margin-left: auto; }
.yel { color: #fbb41f; }
.org { color: #f0862a; }

select { appearance: none; height: 17px; padding: 0 18px 0 6px; line-height: 14px; color: #ccc; border: 1px solid #303030; border-radius: 4px; background: url('data:image/svg+xml,<svg xmlns="http://www.w3.org/2000/svg" width="8" height="5"><path d="M0 0h8L4 4z" fill="%23ddd"/></svg>') no-repeat right 4px center, linear-gradient(#747474, #5e5e5e); }
select:disabled { opacity: .5; }
.num { width: 66px; height: 17px; padding-left: 4px; border: 1px solid #2a2a2a; border-right-color: #5a5a5a; border-bottom-color: #5a5a5a; background: url('data:image/svg+xml,<svg xmlns="http://www.w3.org/2000/svg" width="5" height="10"><path d="M0 4l2.500-4L5 4zM0 6h5l-2.500 4z" fill="%23999"/></svg>') no-repeat right 2px center, #343434; }
.num:disabled { color: #6c6c6c; border-color: #383838 #505050 #505050 #383838; background: url('data:image/svg+xml,<svg xmlns="http://www.w3.org/2000/svg" width="5" height="10"><path d="M0 4l2.500-4L5 4zM0 6h5l-2.500 4z" fill="%236c6c6c"/></svg>') no-repeat right 2px center, #404040; }
input[type=checkbox] { appearance: none; width: 13px; height: 13px; flex: none; border: 1px solid #3a3a3a; border-radius: 3px; background: linear-gradient(#727272, #606060); }
input[type=checkbox]:checked { background: url('data:image/svg+xml,<svg xmlns="http://www.w3.org/2000/svg" width="11" height="11"><path d="M1 5l3 4 6-8" fill="none" stroke="%23ccc" stroke-width="2"/></svg>') #2c2c2c; }
.pill { height: 17px; line-height: 15px; border-radius: 9px; color: #ccc; border: 1px solid #2e2e2e; background: linear-gradient(#747474, #606060); }
.grip { display: block; flex: none; width: 12px; height: 12px; background: linear-gradient(135deg, #b0b0b0 34%, #2a2a2a 34% 66%, #5a5a5a 66%) 0 0 / 3px 3px; }
.grip.tall { width: 6px; height: 18px; }
.grip.wide { width: 27px; height: 5px; align-self: center; }

.titlebar { display: flex; align-items: center; gap: 5px; height: 23px; padding: 0 0 0 2px; background: #c3c3c3; color: #6a6a6a; }
.winbtns { margin-left: auto; align-self: stretch; display: flex; padding: 0 2px 1px 0; }
.winbtns button { width: 46px; display: grid; place-items: center; border: solid #9a9a9a; border-width: 0 0 1px 1px; }
.menubar { display: flex; align-items: center; gap: 14px; height: 24px; padding: 0 2px 3px 8px; }
.menubar label { margin-right: -8px; }
.menubar select { width: 134px; margin-right: -8px; }

.main { flex: 1; display: flex; gap: 4px; }
.left { flex: 1; min-width: 0; display: flex; flex-direction: column; }
.toolbar { display: flex; align-items: center; gap: 11px; height: 41px; padding: 0 0 4px; }
.toolbar .grip { margin-right: -8px; height: 27px; }
.grp, .vgrp, .pgrp { display: flex; border-radius: 3px; overflow: hidden; box-shadow: 0 0 0 1px #2a2a2a; background: #696969; flex: none; }
.grp.close { margin-right: -8px; }
.grp button { width: 36px; height: 34px; border-right: 1px solid #4c4c4c; }
.grp button:last-child { width: 35px; border: 0; }
.grp svg, .vgrp svg { width: 34px; height: 34px; }
.grp button, .vgrp button, .pgrp button { display: grid; place-items: center; color: #1a1a1a; }
.grp .dim { color: #808080; }
.grp .on, .vgrp .on, .pgrp .on { background-color: #8fa9d2; }
.more { background-image: linear-gradient(135deg, transparent 50%, #1a1a1a 50%); background-size: 6px 6px; background-repeat: no-repeat; background-position: right 1px bottom 1px; }
.axis svg, .axis b { grid-area: 1 / 1; }
.axis b { font: 700 20px/20px "Open Sans", sans-serif; }

.work { flex: 1; display: flex; }
.tools { width: 39px; flex: none; padding: 0 3px 0 2px; display: flex; flex-direction: column; gap: 5px; }
.tools .grip { margin-bottom: -1px; }
.vgrp { flex-direction: column; width: 33px; }
.vgrp.gap { margin-bottom: 8px; }
.vgrp button { height: 36px; border-bottom: 1px solid #4c4c4c; }
.vgrp button:last-child { height: 33px; border: 0; }
.vgrp svg { width: 33px; height: 33px; }
.brand { margin-top: auto; height: 90px; display: flex; align-items: flex-end; padding: 0 0 4px 1px; }
.brand span { writing-mode: vertical-rl; transform: rotate(180deg); font: 15px/17px "Noto Sans", sans-serif; color: #929292; white-space: nowrap; }
.brand b { font-style: italic; font-weight: 900; color: #a4a4a4; }

.center { flex: 1; min-width: 0; display: flex; flex-direction: column; }
.panelbar { display: flex; align-items: center; gap: 14px; height: 21px; padding-left: 5px; border-top: 1px solid #646464; border-left: 1px solid #646464; }
.panelbar .grip { margin-right: -5px; }
.panelbar.view { height: 20px; }
.ico { display: flex; align-items: center; gap: 3px; color: #1c1c1c; }
.ico svg { width: 14px; height: 14px; }
small { font-size: 9px; color: #bbb; }
.viewport { flex: 1; position: relative; border: 1px solid #999; min-height: 300px; overflow: hidden; }
.scene { position: absolute; inset: 0; width: 100%; height: 100%; }
.gizmo { font: 11px "Noto Sans", sans-serif; }
.tag { position: absolute; padding: 0 3px; line-height: 15px; border-radius: 3px; color: #d6d6d6; background: rgba(90, 85, 78, .4); }
.tl { left: 2px; top: 2px; }
.br { right: 8px; bottom: 2px; color: #ccc; }

.timeline { display: flex; align-items: center; gap: 3px; height: 31px; padding: 1px 1px 0 0; }
.ruler { flex: 1; height: 23px; position: relative; background: #343434; border: 1px solid #2c2c2c; }
.ruler ol { display: flex; justify-content: space-between; padding-right: 1px; }
.ruler li { width: 12px; flex: none; line-height: 13px; display: flex; justify-content: center; }
.ruler li:first-child { color: #4fe08e; justify-content: flex-start; text-indent: 10px; }
.head { position: absolute; left: 1px; top: -1px; width: 9px; height: 14px; background: #58e092; }
.ticks { position: absolute; left: 5px; bottom: 1px; width: calc(100% - 12px); height: 8px; }
.play { display: flex; align-items: center; gap: 3px; height: 31px; padding: 0 1px 4px 0; }
.play .pgrp { margin-left: 9px; }
.play .solo { margin-left: 13px; }
.play .num, .range { margin-right: 4px; }
.play .end { margin-right: 0; }
.range { flex: 1; display: flex; align-items: center; gap: 2px; height: 17px; padding: 0 5px; border: 1px solid #2c2c2c; border-radius: 4px; background: linear-gradient(#7c7c7c, #646464); color: #3c3c3c; }
.range span:first-child, .range span:last-child { color: #ddd; font-size: 9px; }
.pgrp button { width: 27px; height: 26px; border-right: 1px solid #4c4c4c; }
.pgrp button:last-child { border: 0; }
.pgrp svg { width: 26px; height: 26px; }
.pgrp .axis b { font-size: 14px; }

.bottom { display: flex; gap: 4px; height: 111px; border-bottom: 2px solid #303030; }
.bottom .panelbar { height: 23px; padding-top: 1px; }
.materials { flex: 1; min-width: 0; border-right: 1px solid #303030; }
.matwrap { display: flex; gap: 4px; border-top: 1px solid #303030; padding: 1px 2px 0; }
.materials ul { flex: 1; display: grid; grid-template-columns: repeat(auto-fill, 43px); gap: 5px 6px; height: 83px; overflow: hidden; padding: 1px; }
.materials li { height: 58px; overflow: hidden; white-space: nowrap; background: linear-gradient(#727272, #727272) 0 44px / 100% 20px no-repeat, repeating-linear-gradient(135deg, #6a6a6a 0 6px, #9c9c9c 6px 12px); box-shadow: 0 0 0 1px #333; }
.materials li span { display: block; padding-left: 1px; line-height: 14px; color: #d0d0d0; }
.ball { display: block; width: 39px; height: 39px; margin: 2px 2px 3px; border-radius: 50%; background: radial-gradient(circle at 35% 30%, var(--a), var(--b) 50%, var(--c)); }
.materials svg { width: 43px; height: 44px; }
.faint { opacity: .6; }
.white { --a: #fff; --b: #fff; --c: #999; }
.metal { background: radial-gradient(circle at 40% 35%, #eee, transparent 20%), linear-gradient(#5a5c62, #7c7e84 25%, #4e4e50 45%, #2a241f 55%, #3a3028); }
.base { --a: #444; --b: #303030; --c: #0c0c0c; }
.gray6 { --a: #5c5c5c; --b: #4a4a4a; --c: #141414; }
.gray5 { --a: #858585; --b: #6c6c6c; --c: #222; }
.pic { background: linear-gradient(165deg, #aebccd 0 38%, #4a4436 46%, #6c5d46 65%, #39454e 85%); }
.brown { --a: #6c5a47; --b: #3c2e20; --c: #120c07; }
.black { --a: #4a4d55; --b: #0e1119; --c: #000; }
.blue { --a: #95abd6; --b: #6580b2; --c: #18243c; }
.olive { --a: #8a9436; --b: #5a640c; --c: #181c02; }
.pink { --a: #ece0dc; --b: #cfc4c0; --c: #555; }
.taupe { --a: #9c8f7a; --b: #7a6e5a; --c: #222; }
.wood { --a: #b08248; --b: #87602c; --c: #2a1a08; }
.stone { --a: #b4b4ac; --b: #989890; --c: #444; }
.granite { --a: #a08078; --b: #6a4c44; --c: #221512; }
.brick { --a: #bc6a5c; --b: #96483c; --c: #2c100c; }
.slate { --a: #8d94a4; --b: #666c7c; --c: #1c1e24; }
.coal { --a: #666; --b: #2a2a2a; --c: #080808; }
.silver { --a: #c8c8c8; --b: #989898; --c: #333; }
.leaf { background: repeating-linear-gradient(100deg, #5c6e28 0 2px, #a8ac58 3px 6px); }
.lime { background: repeating-linear-gradient(80deg, #567a22 0 1px, #8cb43a 3px 5px); }
.moss { background: repeating-linear-gradient(5deg, #7c9a58 0 1px, #5c7438 2px 6px); }
.plank { display: block; height: 40px; margin: 2px 1px; background: repeating-linear-gradient(#8a7c68 0 2px, #807260 3px 5px); }
.vscroll { width: 11px; height: 81px; border-radius: 5px; background: #303030; display: flex; flex-direction: column; align-items: center; font-size: 8px; line-height: 10px; color: #999; }
.vscroll i { width: 9px; height: 13px; border-radius: 4px; background: #777; }
.vscroll .down { margin-top: auto; }
.coords { width: 297px; border-right: 1px solid #303030; }
.coords .panelbar span { width: 78px; color: #888; padding-left: 1px; }
.coords .panelbar { gap: 13px; }
.cgrid { display: grid; grid-template-columns: 9px 1fr 9px 1fr 9px 1fr; gap: 3px 0; padding: 4px 4px 0 3px; border-top: 1px solid #646464; }
.cgrid .num, .cgrid select, .cgrid .pill { width: auto; margin: 0 6px 0 1px; }
.cgrid select, .cgrid .pill { margin-top: 2px; }
.c2 { grid-column: 2; }
.c4 { grid-column: 4; }
.c6 { grid-column: 6; }
.status { height: 21px; margin-top: 1px; padding: 4px 4px 4px 3px; border: solid #646464; border-width: 1px 0 0 1px; }

.right { width: 281px; flex: none; display: grid; grid-template: 1fr 116px / 259px 1fr; gap: 3px 2px; padding-top: 1px; }
.right section { border: 1px solid #303030; border-left-color: #646464; display: flex; flex-direction: column; }
.right .panelbar { height: 22px; border-left: 0; }
.objects .panelbar a:last-of-type { margin-left: 1px; }
.objects .ico { gap: 5px; padding-right: 2px; }
.objects .ico small { margin-right: 4px; }
.tree { flex: 1; border-top: 2px solid #646464; margin: 0 1px; background: linear-gradient(90deg, transparent 207px, #303030 207px 208px, transparent 208px 247px, #303030 247px 248px, transparent 248px); }
.tree li { display: grid; grid-template-columns: 16px 18px 173px 19px 9px 12px 1fr; align-items: center; height: 20px; background: linear-gradient(#aaa, #aaa) 7px 0 / 1px 100% no-repeat, linear-gradient(#aaa, #aaa) 7px 9px / 8px 1px no-repeat, linear-gradient(90deg, transparent 207px, #303030 207px 208px, transparent 208px 247px, #303030 247px 248px, transparent 248px); }
.tree li:nth-child(odd) { background-color: #505050; }
.tree li::before { content: ""; width: 9px; height: 9px; margin: -1px 0 0 3px; }
.tree .x::before { border: 1px solid #aaa; background: linear-gradient(#aaa, #aaa) 50% 3px / 5px 1px no-repeat, linear-gradient(#aaa, #aaa) 3px 50% / 1px 5px no-repeat, #474747; }
.tree .last { background-size: 1px 50%, 8px 1px, auto; }
.tree span { padding-left: 1px; white-space: nowrap; }
.ic { width: 16px; height: 16px; }
.ly { width: 12px; height: 12px; margin-left: 3px; }
.vis { width: 5px; height: 13px; margin-left: 2px; background: radial-gradient(circle at 3px 3px, #7a7a7a 2px, transparent 3px) 0 0 / 5px 7px; }
.vis.red { background-image: radial-gradient(circle at 3px 3px, #f05454 2px, transparent 3px); }
.st { width: 11px; height: 11px; }
.tg { grid-column: 7; width: 4px; height: 4px; margin-left: 4px; background: #8fa9ea; }
.tg.or { background: #d87a28; border-radius: 50%; margin-top: -10px; }
.hscroll { display: flex; align-items: center; height: 12px; margin: 3px 3px 2px; border-radius: 6px; background: #303030; font-size: 8px; color: #999; }
.hscroll i { width: 206px; height: 9px; border-radius: 4px; background: #747474; }
.tabs { display: flex; flex-direction: column; align-items: flex-start; gap: 2px; padding-top: 1px; }
.tabs a { writing-mode: vertical-rl; width: 18px; line-height: 16px; padding: 4px 0; background: #333; color: #7c7c7c; border-radius: 0 3px 3px 0; }
.tabs .active { background: #6b6b6b; color: #fba61a; height: 51px; }
.tabs .t2 { height: 97px; }
.tabs .t3 { height: 57px; }
.tabs .t5 { height: 39px; }
.attrs small { margin-left: -7px; }
.attrs .panelbar { border-bottom: 1px solid #646464; }
.attrs .w2 { width: 34px; }
.attrs .ico2 { gap: 5px; margin-left: -6px; padding-right: 2px; }

.dialog { position: absolute; left: 118px; top: 143px; width: 850px; min-height: 550px; display: flex; flex-direction: column; padding: 0 7px 6px; border: 1px solid #2c2c32; background: #6b6b6b; }
.dialog header { display: flex; align-items: center; gap: 5px; height: 30px; padding-left: 8px; border-bottom: 1px solid #7c8896; color: #fff; }
.dbtns { margin-left: auto; display: flex; align-self: stretch; height: 30px; }
.dbtns button { width: 46px; display: grid; place-items: center; border: solid #333; border-width: 0 0 1px 1px; }
.dbtns .x { background: #c55a50; }
.dgrip { height: 19px; padding: 3px 5px; border-bottom: 1px solid #333; }
.dbody { flex: 1; display: flex; background: #474747; border-bottom: 1px solid #8a93a0; }
.dleft { width: 250px; padding: 5px 4px 0 0; display: flex; flex-direction: column; border-right: 1px solid #707070; }
.engine { display: flex; align-items: center; justify-content: flex-end; gap: 5px; font-weight: 700; padding-right: 4px; height: 17px; }
.engine select { width: 138px; font-weight: 400; }
.opts { margin-top: 5px; flex: 1; }
.opts li { display: flex; align-items: center; height: 17px; padding-left: 4px; background: linear-gradient(#909090, #909090) 33px 0 / 1px 100% no-repeat, linear-gradient(#909090, #909090) 33px 8px / 8px 1px no-repeat; }
.opts li:nth-child(odd) { background-color: #4f4f4f; }
.opts li:last-child { background-size: 1px 9px, 8px 1px; }
.opts i { width: 13px; }
.opts label, .opts span { margin-left: 25px; }
.sel, .preset { color: #fba61a; }
.btnrow { display: grid; grid-template-columns: 1fr 1fr; gap: 4px; padding-bottom: 4px; border-bottom: 1px solid #707070; }
.preset { display: flex; align-items: center; gap: 19px; height: 18px; margin: 3px 0 124px; padding-left: 4px; background: linear-gradient(#909090, #909090) 26px 0 / 1px 9px no-repeat, linear-gradient(#909090, #909090) 26px 8px / 8px 1px no-repeat, #4f4f4f; }
.full { width: 100%; }
.dright { flex: 1; padding: 7px 2px 0 3px; }
.dright h3, .dright h4 { height: 16px; line-height: 16px; padding-left: 2px; background: #333; font-weight: 700; }
.form { margin-top: 3px; padding: 2px 8px 3px; background: #4f4f4f; }
.dtabs { display: flex; width: 466px; margin: 0 0 4px -6px; border: 1px solid #2c2c2c; border-radius: 3px; overflow: hidden; }
.dtabs button { flex: 1 1 0; height: 16px; line-height: 15px; color: #ccc; background: #696969; border-right: 1px solid #2c2c2c; white-space: nowrap; }
.dtabs button:last-child { border: 0; }
.dtabs .cur { background: #8fa9d2; color: #111; }
.form hr { height: 2px; margin: 3px 0 2px; border: 0; border-top: 1px solid #333; border-bottom: 1px solid #6c6c6c; }
.row { display: flex; align-items: center; height: 19px; padding-left: 20px; }
.row label { width: 162px; margin-right: 2px; overflow: hidden; white-space: nowrap; }
.row label::after { content: " . . . . . . . . . . . . . . . . . . . . . . . ."; font-weight: 400; }
.row.plain label::after { content: none; }
.row select { width: 188px; }
.row.n { height: 20px; }
.row.c { height: 18px; }
.row.ar { padding-left: 5px; }
.row.ar::before { content: ""; width: 5px; margin-right: 10px; border: solid transparent; border-width: 4px 0 4px 5px; border-left-color: #161616; }
.row.pre { height: 17px; margin-top: 4px; }
.row.pre label { width: 58px; margin-right: 8px; overflow: visible; }
.row.pre label::after { content: none; }
.row.pre select { width: 280px; }
.bd { font-weight: 700; }

.taskbar { display: flex; height: 40px; background: linear-gradient(90deg, #10222b, #141b20 35%, #0e181f 60%, #0c1a22); color: #fff; }
.start, .app { width: 48px; display: grid; place-items: center; }
.app { width: 49px; }
.app.cur { background: #495158; border-bottom: 2px solid #b8bcc0; }
.app.run { background: linear-gradient(#b8bcc0, #b8bcc0) 5px 100% / 40px 2px no-repeat; }
.search { width: 344px; display: flex; align-items: center; gap: 9px; padding: 0 13px 0 9px; background: #f2f2f2; }
.search input { flex: 1; font-size: 14px; color: #333; }
.search input::placeholder { color: #333; opacity: 1; }
.tray { margin-left: auto; display: flex; align-items: center; gap: 16px; padding-right: 16px; }
.tray svg:nth-child(2) { margin: 0 -8px 0 6px; }
.tray time { text-align: center; line-height: 18px; margin-left: -7px; }
.note { font: 13px "Noto Sans", sans-serif; fill: #fff; }
```
